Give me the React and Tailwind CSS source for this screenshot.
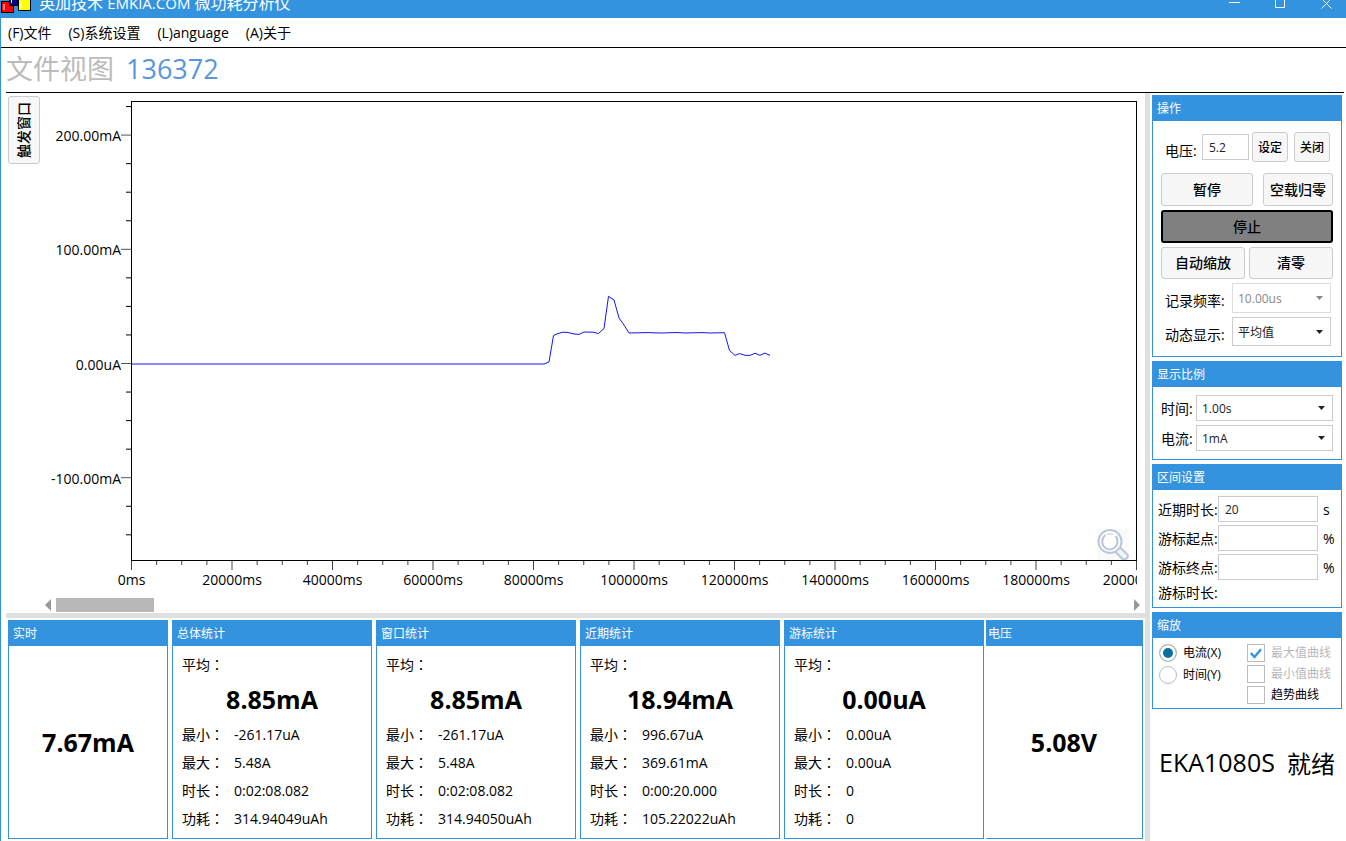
import { useState } from "react";

const MENU = ["(F)文件", "(S)系统设置", "(L)anguage", "(A)关于"];

const STATS = [
  { title: "总体统计", avg: "8.85mA", min: "-261.17uA", max: "5.48A", time: "0:02:08.082", power: "314.94049uAh" },
  { title: "窗口统计", avg: "8.85mA", min: "-261.17uA", max: "5.48A", time: "0:02:08.082", power: "314.94050uAh" },
  { title: "近期统计", avg: "18.94mA", min: "996.67uA", max: "369.61mA", time: "0:00:20.000", power: "105.22022uAh" },
  { title: "游标统计", avg: "0.00uA", min: "0.00uA", max: "0.00uA", time: "0", power: "0" },
];

// Plot scale: pixels per 20000ms and per 100mA, and where 0uA sits.
const X_STEP = 100.5;
const Y_STEP = 114.2;
const Y_ZERO = 262.5;
const Y_LABELS = { 2: "200.00mA", 1: "100.00mA", 0: "0.00uA", "-1": "-100.00mA" };

const TRACE = [
  [0, 262], [412, 262], [417, 260], [421.5, 233.5], [426, 231.5], [431, 230.2], [436, 230.5],
  [442, 232], [447, 232.4], [452, 230], [461, 230.2], [466.5, 231.5], [472, 226.5], [476.5, 194.3],
  [482, 198], [487, 216], [491, 221.5], [497, 231], [515, 230.6], [530, 231], [545, 230.5],
  [553, 231], [570, 230.6], [578, 231], [592.5, 230.7], [597.5, 248.5], [603, 253.4], [607.5, 251.5],
  [613, 253.3], [618, 253.4], [623, 251.2], [628, 253.4], [633, 251.1], [638, 253.3],
];

function Panel({ title, className = "", children }) {
  return (
    <section className={`flex flex-col border border-[#3393df] bg-white ${className}`}>
      <h2 className="h-[25px] shrink-0 bg-[#3393df] px-1 text-xs leading-[26px] text-white">{title}</h2>
      {children}
    </section>
  );
}

function Btn({ className = "", children }) {
  return (
    <button
      type="button"
      className={`rounded-[3px] border border-[#cccccc] bg-[#f7f7f7] text-black ${className}`}
    >
      {children}
    </button>
  );
}

function Pick({ id, value, disabled, className = "" }) {
  return (
    <div className={`relative ${className}`}>
      <select
        id={id}
        disabled={disabled}
        defaultValue={value}
        className="h-full w-full appearance-none border border-[#cccccc] bg-white pt-[2px] pl-[5px] text-xs text-[#222222] disabled:border-[#dddddd] disabled:text-[#888888] disabled:opacity-100"
      >
        <option>{value}</option>
      </select>
      <svg
        viewBox="0 0 7 4"
        className={`pointer-events-none absolute top-1/2 right-2 -mt-[2px] h-1 w-[7px] ${disabled ? "fill-[#888888]" : "fill-[#222222]"}`}
      >
        <path d="M0 0h7L3.5 4z" />
      </svg>
    </div>
  );
}

function RangeRow({ id, label, value, unit }) {
  return (
    <div className="flex items-center">
      <label htmlFor={id} className="w-[60px] shrink-0 pt-[2px] whitespace-nowrap">
        {label}
      </label>
      <input
        id={id}
        defaultValue={value}
        className="h-[26px] w-[100px] border border-[#cccccc] px-[6px] text-xs text-[#222222]"
      />
      <span className="ml-[5px] pt-[2px]">{unit}</span>
    </div>
  );
}

function Axis({ checked, label, onChange }) {
  return (
    <label className="flex h-[22px] items-center gap-[6px]">
      <input
        type="radio"
        name="axis"
        checked={checked}
        onChange={onChange}
        className="size-[18px] shrink-0 appearance-none rounded-full border border-[#bbbbbb] bg-white checked:bg-[#086f9e] checked:shadow-[inset_0_0_0_3px_white]"
      />
      {label}
    </label>
  );
}

function Curve({ label, checked, disabled }) {
  return (
    <label className={`flex items-center gap-[6px] ${disabled ? "text-[#b8b8b8]" : ""}`}>
      <span className="grid shrink-0">
        <input
          type="checkbox"
          defaultChecked={checked}
          disabled={disabled}
          className="peer col-start-1 row-start-1 size-[18px] appearance-none border border-[#bbbbbb] bg-white"
        />
        <svg
          viewBox="0 0 18 18"
          className="pointer-events-none invisible col-start-1 row-start-1 size-[18px] fill-none stroke-[#3393df] stroke-[2.4] peer-checked:visible"
        >
          <path d="M3.8 9.2 7.5 13 14 5.2" />
        </svg>
      </span>
      {label}
    </label>
  );
}

function StatRow({ k, v }) {
  return (
    <div className="flex h-7 items-center">
      <dt className="w-[52px] shrink-0">
        {k}
        <span className="font-['Noto_Sans_CJK_TC',sans-serif] leading-none">：</span>
      </dt>
      <dd>{v}</dd>
    </div>
  );
}

function YAxis() {
  const ticks = Array.from({ length: 16 }, (_, i) => 9 - i);
  return (
    <svg className="w-[91px] shrink-0">
      {ticks.map((n) => {
        const y = Y_ZERO - (n * Y_STEP) / 4;
        const major = n % 4 === 0;
        return (
          <g key={n}>
            <path d={`M${major ? 81 : 86} ${y}H91`} className={major ? "stroke-[#555555]" : "stroke-black"} />
            {major && (
              <text x="81" y={y + 6} textAnchor="end" className="fill-black text-sm">
                {Y_LABELS[n / 4]}
              </text>
            )}
          </g>
        );
      })}
    </svg>
  );
}

function XAxis() {
  const ticks = Array.from({ length: 41 }, (_, i) => i);
  return (
    <svg className="h-[34px] w-full">
      {ticks.map((n) => {
        const x = 91.5 + (n * X_STEP) / 4;
        const major = n % 4 === 0;
        return (
          <g key={n}>
            <path d={`M${x} 0V${major ? 9 : 4}`} className="stroke-[#444444]" />
            {major && (
              <text x={x} y="24" textAnchor="middle" className="fill-black text-sm">
                {n * 5000}ms
              </text>
            )}
          </g>
        );
      })}
    </svg>
  );
}

function Chart() {
  return (
    <div className="flex min-h-[520px] flex-1 pl-[2px]">
      <div className="pt-[3px]">
        <Btn className="flex h-[68px] w-8 items-center justify-center text-sm font-medium">
          <span className="rotate-180 [text-orientation:sideways] [writing-mode:vertical-rl]">触发窗口</span>
        </Btn>
      </div>
      <div className="flex min-w-0 flex-1 flex-col pt-2">
        <div className="flex flex-1 pr-2">
          <YAxis />
          <div className="relative flex-1 border border-black">
            <svg className="absolute inset-0 h-full w-full">
              <polyline points={TRACE.map((p) => p.join()).join(" ")} className="fill-none stroke-[#1414f0]" />
            </svg>
            <button type="button" aria-label="缩放" className="absolute right-[7px] bottom-0 h-[31px] bg-[#fafafa]">
              <svg viewBox="0 0 32 31" className="block h-[31px] w-8 fill-none stroke-[#b9c7d6] stroke-2">
                <path d="m18 22.500 4.500-4.500 8 7.500q1 2.500-1 4q-2 1.500-4 .5z" className="fill-[#eef5fc]" />
                <circle cx="13" cy="12.500" r="11.500" className="fill-white" />
                <path d="M8.500 6a8 8 0 0 0 0 13q4 3 8.500 0a8 8 0 0 0 1.500-12" />
                <path d="M10 5.500a8 8 0 0 1 6 0" strokeWidth="1" />
              </svg>
            </button>
          </div>
        </div>
        <div className="pr-2">
          <XAxis />
        </div>
        <div className="flex h-[18px] items-center gap-1 pt-[3px] pr-1 pb-px pl-[5px]">
          <button type="button" aria-label="向左">
            <svg viewBox="0 0 7 12" className="block h-3 w-[7px] fill-[#999999]">
              <path d="M6 0v12L0 6z" />
            </svg>
          </button>
          <div className="flex-1">
            <div className="h-[14px] w-[98px] bg-[#b8b8b8]" />
          </div>
          <button type="button" aria-label="向右">
            <svg viewBox="0 0 7 12" className="block h-3 w-[7px] fill-[#999999]">
              <path d="M0 0v12L6 6z" />
            </svg>
          </button>
        </div>
      </div>
    </div>
  );
}

function Stats() {
  return (
    <div className="flex min-h-[219px] gap-[2px] px-[2px]">
      <div className="flex flex-1 gap-1">
        <Panel title="实时" className="w-40 shrink-0">
          <p className="flex flex-1 items-center justify-center pt-[2px] text-[25px] font-bold">7.67mA</p>
        </Panel>
        {STATS.map((s) => (
          <Panel key={s.title} title={s.title} className="min-w-0 flex-1">
            <dl className="px-[9px] pt-[5px]">
              <StatRow k="平均" />
              <dd className="flex h-[42px] items-center justify-center text-[25px] font-bold">{s.avg}</dd>
              <StatRow k="最小" v={s.min} />
              <StatRow k="最大" v={s.max} />
              <StatRow k="时长" v={s.time} />
              <StatRow k="功耗" v={s.power} />
            </dl>
          </Panel>
        ))}
      </div>
      <Panel title="电压" className="w-[157px] shrink-0 border-l-0 [&>h2]:px-[2px]">
        <p className="flex flex-1 items-center justify-center pt-[2px] text-[25px] font-bold">5.08V</p>
      </Panel>
    </div>
  );
}

function Sidebar() {
  const [axis, setAxis] = useState("x");

  return (
    <aside className="flex w-[190px] shrink-0 flex-col gap-1 pt-[2px]">
      <Panel title="操作">
        <div className="flex flex-col gap-1 px-2 pt-[11px] pb-[10px]">
          <div className="flex items-center pl-1">
            <label htmlFor="volt" className="w-[37px] pt-2 whitespace-nowrap">
              电压:
            </label>
            <input
              id="volt"
              defaultValue="5.2"
              className="h-[26px] w-[47px] border border-[#cccccc] px-[6px] text-xs text-[#222222]"
            />
            <Btn className="ml-[3px] h-[30px] w-9 pt-[2px] text-xs font-medium">设定</Btn>
            <Btn className="ml-[6px] h-[30px] w-9 pt-[2px] text-xs font-medium">关闭</Btn>
          </div>
          <div className="flex justify-between pt-[7px]">
            <Btn className="h-[33px] w-[92px] text-sm font-medium">暂停</Btn>
            <Btn className="h-[33px] w-[70px] text-sm font-medium">空载归零</Btn>
          </div>
          <button
            type="button"
            className="h-[33px] rounded-[3px] border-2 border-black bg-[#808080] text-sm font-medium"
          >
            停止
          </button>
          <div className="flex gap-1">
            <Btn className="h-8 flex-1 text-sm font-medium">自动缩放</Btn>
            <Btn className="h-8 flex-1 text-sm font-medium">清零</Btn>
          </div>
          <div className="flex items-center justify-between pr-[2px] pl-1">
            <label htmlFor="rate" className="pt-[6px]">
              记录频率:
            </label>
            <Pick id="rate" value="10.00us" disabled className="h-[30px] w-[99px]" />
          </div>
          <div className="flex items-center justify-between pr-[2px] pl-1">
            <label htmlFor="mode" className="pt-[6px]">
              动态显示:
            </label>
            <Pick id="mode" value="平均值" className="h-[29px] w-[99px]" />
          </div>
        </div>
      </Panel>

      <Panel title="显示比例">
        <div className="flex flex-col gap-1 px-2 py-2">
          <div className="flex items-center justify-between">
            <label htmlFor="scale-time" className="pt-[2px]">
              时间:
            </label>
            <Pick id="scale-time" value="1.00s" className="h-[26px] w-[137px]" />
          </div>
          <div className="flex items-center justify-between">
            <label htmlFor="scale-current" className="pt-[2px]">
              电流:
            </label>
            <Pick id="scale-current" value="1mA" className="h-[26px] w-[137px]" />
          </div>
        </div>
      </Panel>

      <Panel title="区间设置">
        <div className="flex flex-col gap-[3px] pt-[6px] pl-[5px]">
          <RangeRow id="recent" label="近期时长:" value="20" unit="s" />
          <RangeRow id="start" label="游标起点:" unit="%" />
          <RangeRow id="end" label="游标终点:" unit="%" />
          <p className="h-6 leading-5">游标时长:</p>
        </div>
      </Panel>

      <Panel title="缩放">
        <div className="flex gap-[26px] px-[6px] pt-1 pb-1 text-xs">
          <div>
            <Axis label="电流(X)" checked={axis === "x"} onChange={() => setAxis("x")} />
            <Axis label="时间(Y)" checked={axis === "y"} onChange={() => setAxis("y")} />
          </div>
          <div className="flex flex-col gap-[3px] pt-[2px]">
            <Curve label="最大值曲线" checked disabled />
            <Curve label="最小值曲线" disabled />
            <Curve label="趋势曲线" />
          </div>
        </div>
      </Panel>

      <p className="flex gap-3 pt-8 pl-[7px] text-[25px] whitespace-nowrap">
        <span>EKA1080S</span>
        <span className="text-2xl leading-[38px]">就绪</span>
      </p>
    </aside>
  );
}

export default function App() {
  return (
    <div className="flex min-h-screen flex-col bg-white font-['Open_Sans','Noto_Sans_CJK_SC',sans-serif] text-sm text-black">
      <header className="flex h-[18px] items-end overflow-hidden bg-[#3393df] text-white">
        <div className="flex h-[30px] flex-1 items-center pl-px">
          <svg viewBox="0 0 32 20" className="mr-[6px] h-5 w-8">
            <path d="M0 8h13v12H0z" />
            <path d="M1 9h11v10H1z" fill="#f00" />
            <path d="M8 0h9v13H8z" />
            <path d="M9 0h7v12H9z" fill="#000080" />
            <path d="M17 0h13v18H17z" />
            <path d="M18 0h11v17H18z" fill="#ff0" />
            <path d="M3 11v6M10.500 5v5M20 8v7" stroke="#fff" />
          </svg>
          <h1 className="text-base whitespace-nowrap">
            英加技术 <span className="text-[15px]">EMKIA.COM</span> 微功耗分析仪
          </h1>
          <div className="ml-auto flex gap-[6px] [&_svg]:size-[11px] [&_svg]:fill-none [&_svg]:stroke-white">
            <button type="button" aria-label="最小化" className="flex w-10 justify-center">
              <svg>
                <path d="M0 4.500h11" />
              </svg>
            </button>
            <button type="button" aria-label="最大化" className="flex w-10 justify-center">
              <svg>
                <path d="M.5.500h9v9h-9z" />
              </svg>
            </button>
            <button type="button" aria-label="关闭窗口" className="flex w-10 justify-center">
              <svg>
                <path d="m.5.500 10 10m0-10-10 10" />
              </svg>
            </button>
          </div>
        </div>
      </header>

      <div className="flex flex-1 flex-col border-l border-[#3393df]">
        <nav className="flex h-[30px] items-center gap-[17px] border-b border-black pl-[7px]">
          {MENU.map((m) => (
            <button key={m} type="button">
              {m}
            </button>
          ))}
        </nav>

        <div className="mr-[2px] ml-[5px] flex h-[45px] items-center gap-3 border-b border-black pb-[2px] text-[27px]">
          <span className="text-[#bcbcbc]">文件视图</span>
          <span className="text-[#5a96dc]">136372</span>
        </div>

        <div className="flex flex-1 pr-1 pl-[5px]">
          <main className="flex min-w-0 flex-1 flex-col pb-[2px]">
            <Chart />
            <div className="mb-[2px] h-[5px] bg-[#e0e0e0]" />
            <Stats />
          </main>
          <div className="mr-[2px] w-[5px] shrink-0 bg-[#e0e0e0]" />
          <Sidebar />
        </div>
      </div>
    </div>
  );
}
